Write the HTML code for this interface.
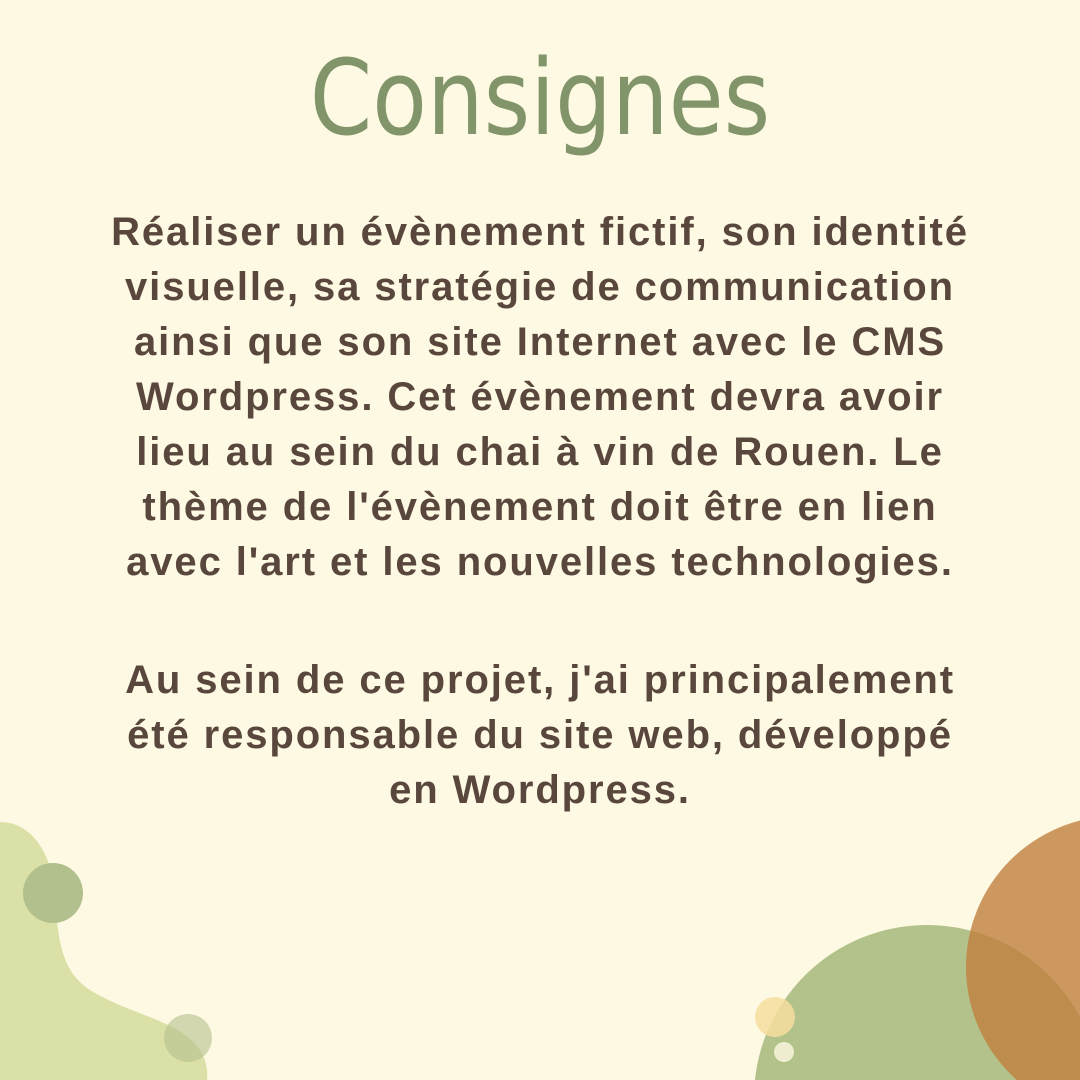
<!DOCTYPE html>
<html><head><meta charset="utf-8"><style>
html,body{margin:0;padding:0}
body{width:1080px;height:1080px;background:#fdf9e2;position:relative;overflow:hidden;font-family:"Liberation Sans",sans-serif}
h1{position:absolute;left:0;width:1080px;top:38px;margin:0;text-align:center;font-weight:normal;font-size:104px;line-height:120px;color:#82956a;letter-spacing:0;font-family:"DejaVu Sans","Liberation Sans",sans-serif;transform:scaleX(0.86)}
.p{position:absolute;left:0;width:1080px;text-align:center;font-weight:bold;font-size:40px;line-height:55px;color:#59463c;letter-spacing:1.9px}
svg{position:absolute;left:0;top:0;overflow:hidden}
</style></head><body>
<svg width="1080" height="1080" viewBox="0 0 1080 1080">
<path d="M0 822 C30 822 48 850 53 880 C58 940 60 970 90 990 C130 1015 180 1020 200 1050 C207 1062 208 1072 207 1080 L0 1080 Z" fill="#dae0a6"/>
<circle cx="53" cy="893" r="30" fill="#b1c08c"/>
<circle cx="188" cy="1038" r="24" fill="#b6c08f" fill-opacity="0.6"/>
<circle cx="927" cy="1098" r="173" fill="#b3c18b"/>
<circle cx="1117" cy="967" r="151" fill="#c07f3e" fill-opacity="0.8"/>
<circle cx="775" cy="1017" r="20" fill="#f6de9f" fill-opacity="0.85"/>
<circle cx="784" cy="1052" r="10" fill="#efedd0"/>
</svg>
<h1>Consignes</h1>
<div class="p" style="top:205px">Réaliser un évènement fictif, son identité<br>visuelle, sa stratégie de communication<br>ainsi que son site Internet avec le CMS<br>Wordpress. Cet évènement devra avoir<br>lieu au sein du chai à vin de Rouen. Le<br>thème de l'évènement doit être en lien<br>avec l'art et les nouvelles technologies.</div>
<div class="p" style="top:653px">Au sein de ce projet, j'ai principalement<br>été responsable du site web, développé<br>en Wordpress.</div>
</body></html>
